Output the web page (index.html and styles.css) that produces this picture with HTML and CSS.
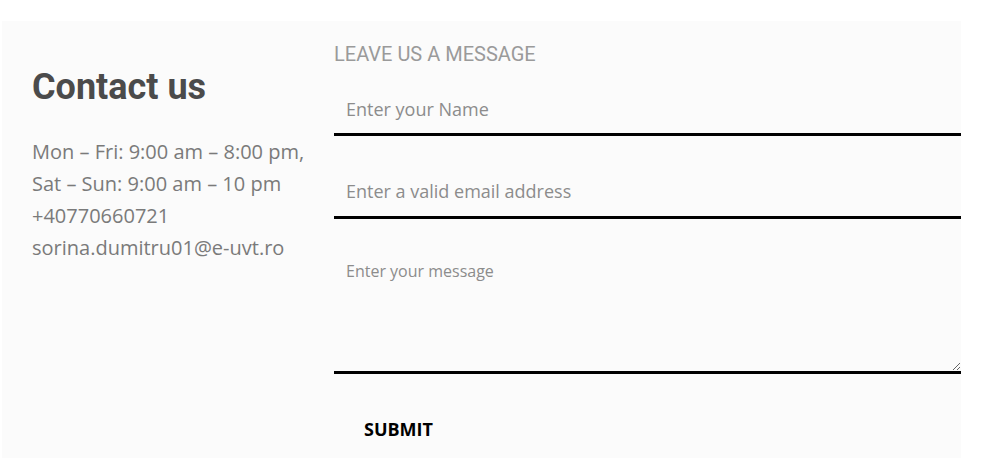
FILE: index.html
```html
<!DOCTYPE html>
<html lang="en">
<head>
<meta charset="utf-8">
<title>Contact us</title>
<link rel="stylesheet" href="styles.css">
</head>
<body>
<section class="panel">
  <div class="info">
    <h1 class="heading">Contact us</h1>
    <p class="details">Mon – Fri: 9:00 am – 8:00 pm,<br>Sat – Sun: 9:00 am – 10 pm<br>+40770660721<br>sorina.dumitru01@e-uvt.ro</p>
  </div>
  <form class="form">
    <h2 class="form-title">LEAVE US A MESSAGE</h2>
    <input class="field" type="text" placeholder="Enter your Name">
    <input class="field" type="email" placeholder="Enter a valid email address">
    <textarea class="message" placeholder="Enter your message"></textarea>
    <button class="submit" type="button">SUBMIT</button>
  </form>
</section>
</body>
</html>
```

FILE: styles.css
```css
html, body {
  margin: 0;
  padding: 0;
  background: #ffffff;
}

body {
  font-family: "Open Sans", sans-serif;
}

.panel {
  margin: 21px 0 0 2px;
  width: 959px;
  background: #fbfbfb;
  display: grid;
  grid-template-columns: 332px 627px;
  padding-top: 21px;
  padding-bottom: 20px;
  box-sizing: border-box;
}

.info {
  padding-left: 30px;
}

.heading {
  font-family: Roboto, sans-serif;
  font-weight: 700;
  font-size: 36px;
  line-height: normal;
  color: #4b4b4b;
  margin: 24px 0 0 0;
}

.details {
  margin: 28px 0 0 0;
  font-size: 20px;
  line-height: 32px;
  color: #7a7a7a;
}

.form {
  display: flex;
  flex-direction: column;
  align-items: flex-start;
}

.form-title {
  font-family: Roboto, sans-serif;
  font-weight: 400;
  font-size: 20px;
  line-height: normal;
  color: #9a9a9a;
  margin: 0;
}

.field {
  margin-top: 19px;
  width: 100%;
  height: 51px;
  box-sizing: border-box;
  border: none;
  border-bottom: 3px solid #000000;
  background: transparent;
  padding: 0 12px;
  font-family: "Open Sans", sans-serif;
  font-size: 18px;
  color: #333333;
  outline: none;
}

.field + .field {
  margin-top: 32px;
  padding-bottom: 2px;
}

.field::placeholder,
.message::placeholder {
  color: #8c8c8c;
  opacity: 1;
}

.message {
  margin-top: 32px;
  width: 100%;
  height: 123px;
  box-sizing: border-box;
  border: none;
  border-bottom: 3px solid #000000;
  background: transparent;
  padding: 9px 12px 7px;
  font-family: "Open Sans", sans-serif;
  font-size: 16px;
  line-height: normal;
  color: #333333;
  outline: none;
  resize: vertical;
}

.submit {
  margin-top: 28px;
  border: none;
  background: transparent;
  padding: 15px 30px;
  font-family: "Open Sans", sans-serif;
  font-weight: 700;
  font-size: 18px;
  line-height: normal;
  color: #000000;
  cursor: pointer;
}
```
